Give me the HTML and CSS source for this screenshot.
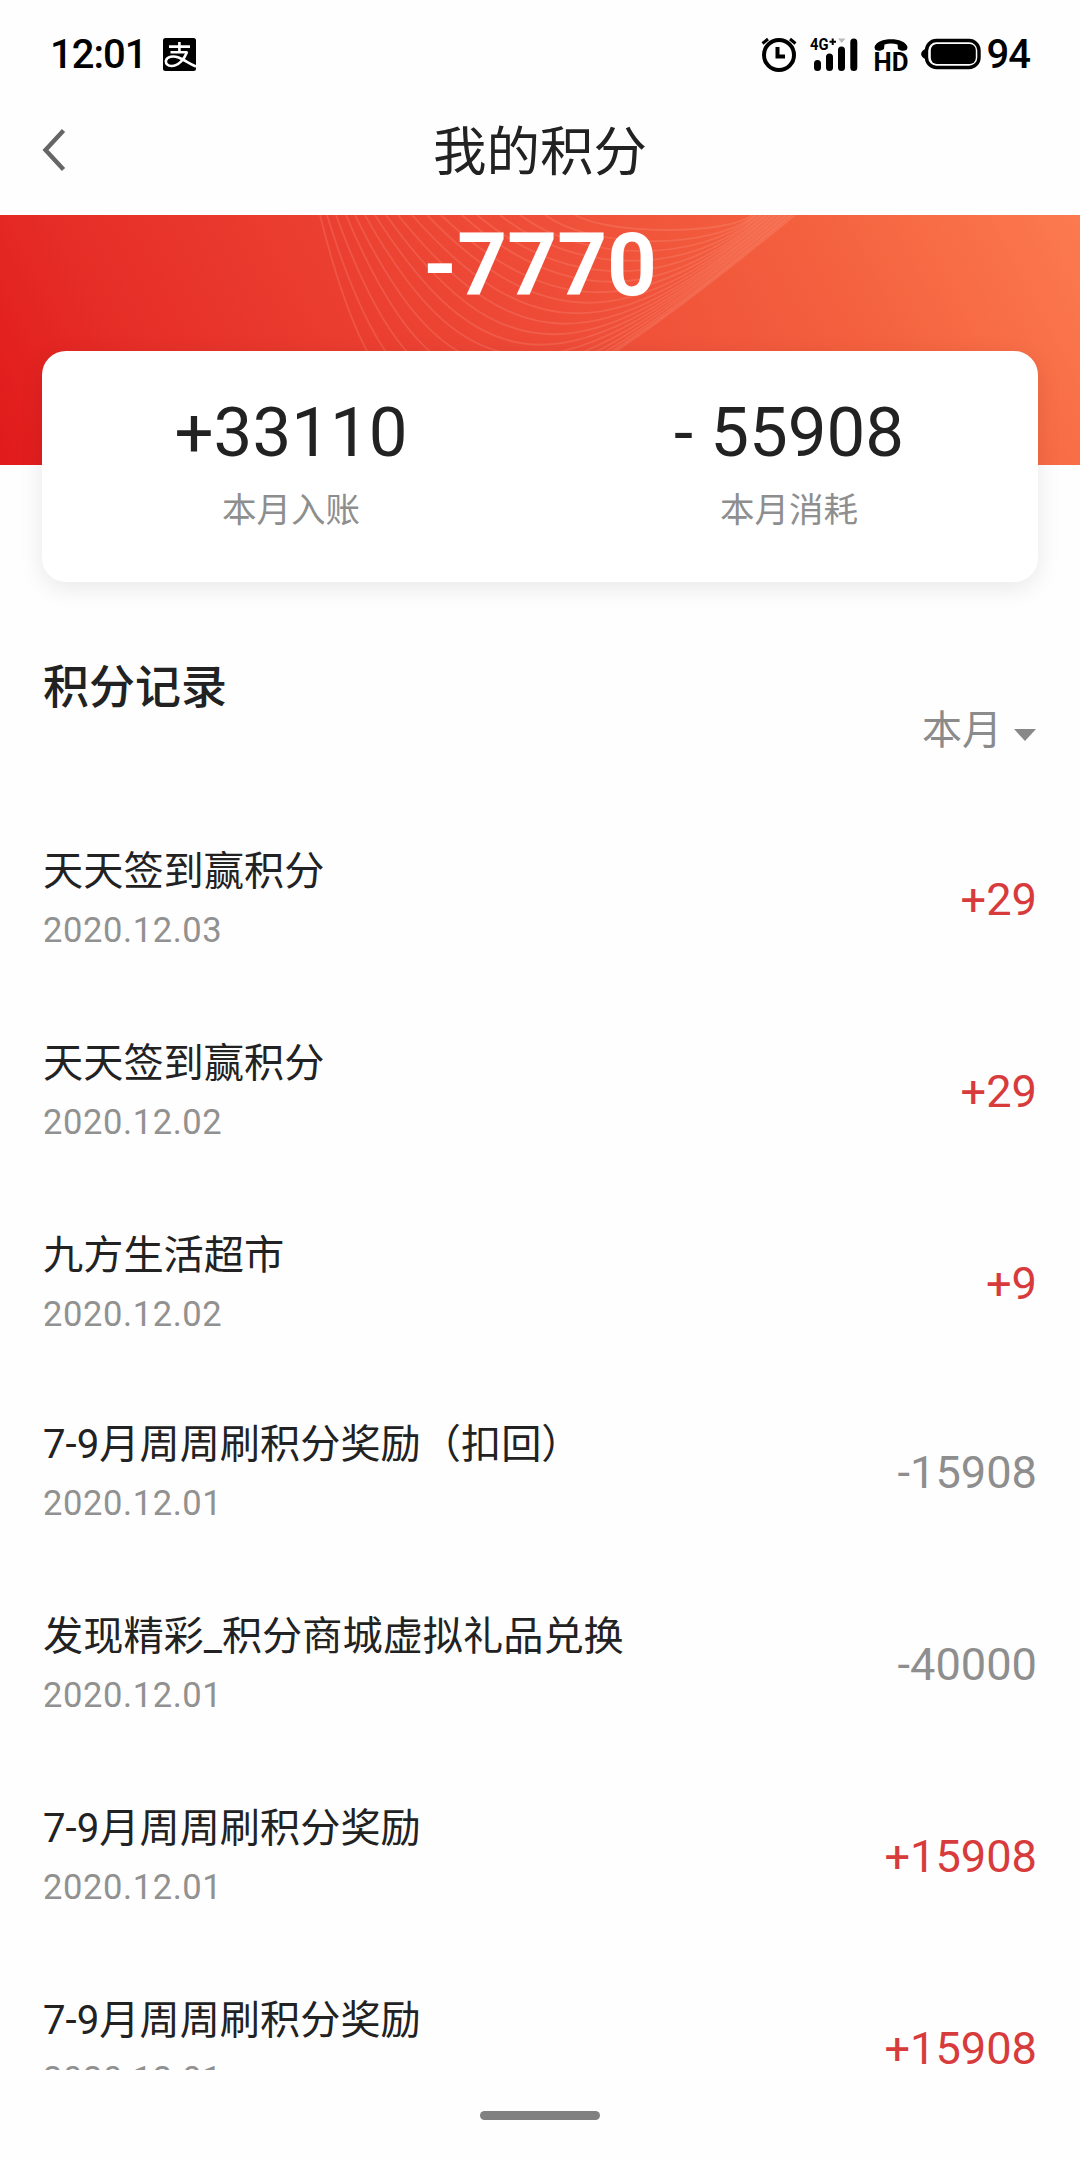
FILE: index.html
```
<!DOCTYPE html>
<html lang="zh-CN">
<head>
<meta charset="utf-8">
<title>我的积分</title>
<link rel="stylesheet" href="styles.css">
</head>
<body>
<div class="screen">
  <div class="status">
    <span class="clock">12:01</span>
    <svg class="pay" width="33" height="33" viewBox="0 0 33 33">
      <rect width="33" height="33" rx="2.5" fill="#000"/>
      <g fill="none" stroke="#fff" stroke-width="2.6">
        <path d="M6 8.6H27M16.4 4V14M7.5 14.2H24.5"/>
        <path d="M24 14C21.5 21 15.500 28 8.500 28C4.500 28 2.500 25.500 3 22.500C4 18.500 10 17.500 15.500 19.500C21 21.500 26 25.500 33 28.500"/>
      </g>
    </svg>
    <div class="indicators">
      <svg class="alarm" width="36" height="36" viewBox="0 0 36 36" fill="none" stroke="#000">
        <circle cx="18" cy="19" r="15" stroke-width="4"/>
        <path d="M16.500 11V20.500H24" stroke-width="4"/>
        <path d="M1.500 7.500L7 3M34.500 7.500L29 3" stroke-width="3"/>
      </svg>
      <svg class="signal" width="50" height="36" viewBox="0 0 50 36">
        <text x="0" y="14" class="net" textLength="18.500" lengthAdjust="spacingAndGlyphs">4G</text>
        <path d="M22.700 2.500V9M19.500 5.700H26" stroke="#000" stroke-width="2"/>
        <path d="M28 2.500H35.500L31.700 7Z" fill="#bbb"/>
        <g stroke="#000" stroke-width="7" stroke-linecap="round">
          <path d="M7.500 27.500V31.500M19.500 21V31.500M31.500 14V31.500M43.800 6V31.500"/>
        </g>
      </svg>
      <svg class="hd" width="34" height="36" viewBox="0 0 34 36">
        <path d="M0.500 11C3 0.500 31 0.500 33.500 11L33 13.500C30 15.500 27 15 24 13L23.500 8.500C19 7 15 7 10.500 8.500L10 13C7 15 4 15.500 1 13.500Z"/>
        <text x="-0.500" y="34.500" class="hd-text" textLength="35" lengthAdjust="spacingAndGlyphs">HD</text>
      </svg>
      <svg class="battery" width="60" height="32" viewBox="0 0 60 32">
        <path d="M5 10.500C-1.500 13.500 -1.500 18.500 5 21.500Z"/>
        <rect x="5.500" y="2.500" width="52.500" height="27" rx="10" fill="#fff" stroke="#000" stroke-width="3.400"/>
        <rect x="9.800" y="6" width="45" height="20" rx="6"/>
      </svg>
      <span class="level">94</span>
    </div>
  </div>
  <header class="nav">
    <svg class="back" width="26" height="46" viewBox="0 0 26 46"><path d="M23.500 3.500L5.500 23L23.500 42.500" fill="none" stroke="#666" stroke-width="4.400"/></svg>
    <h1>我的积分</h1>
  </header>
  <section class="hero">
    <svg class="waves" width="1080" height="250" viewBox="0 0 1080 250" fill="none" stroke="#ffb09a" stroke-opacity=".2" stroke-width="1.800">
      <path d="M320 0C387 270 466 270 795 0"/>
      <path d="M327 0C405 253 488 253 792 0"/>
      <path d="M336 0C422 236 507 236 790 0"/>
      <path d="M346 0C439 220 523 220 787 0"/>
      <path d="M355 0C454 203 541 203 785 0"/>
      <path d="M365 0C470 187 558 187 782 0"/>
      <path d="M375 0C485 173 572 173 780 0"/>
      <path d="M386 0C500 159 587 159 777 0"/>
      <path d="M398 0C515 145 602 145 775 0"/>
      <path d="M412 0C528 131 616 131 772 0"/>
      <path d="M427 0C540 117 630 117 770 0"/>
      <path d="M441 0C549 103 645 103 767 0"/>
      <path d="M462 0C561 89 659 89 765 0"/>
      <path d="M477 0C567 75 672 75 762 0"/>
      <path d="M500 0C577 61 687 61 760 0"/>
      <path d="M520 0C584 48 699 48 757 0"/>
      <path d="M545 0C594 35 713 35 755 0"/>
      <path d="M575 0C610 20 728 20 752 0"/>
    </svg>
    <div class="total">-7770</div>
  </section>
  <section class="card">
    <div class="stat"><strong>+33110</strong><span>本月入账</span></div>
    <div class="stat"><strong>- 55908</strong><span>本月消耗</span></div>
  </section>
  <section class="head">
    <h2>积分记录</h2>
    <div class="filter">本月<svg width="22" height="12" viewBox="0 0 22 12"><path d="M0 0H22L11 12Z" fill="#888"/></svg></div>
  </section>
  <ul class="list">
    <li><div><p class="name">天天签到赢积分</p><p class="date">2020.12.03</p></div><b class="plus">+29</b></li>
    <li><div><p class="name">天天签到赢积分</p><p class="date">2020.12.02</p></div><b class="plus">+29</b></li>
    <li class="short"><div><p class="name">九方生活超市</p><p class="date">2020.12.02</p></div><b class="plus">+9</b></li>
    <li><div><p class="name">7-9月周周刷积分奖励（扣回）</p><p class="date">2020.12.01</p></div><b>-15908</b></li>
    <li><div><p class="name">发现精彩_积分商城虚拟礼品兑换</p><p class="date">2020.12.01</p></div><b>-40000</b></li>
    <li><div><p class="name">7-9月周周刷积分奖励</p><p class="date">2020.12.01</p></div><b class="plus">+15908</b></li>
    <li><div><p class="name">7-9月周周刷积分奖励</p><p class="date">2020.12.01</p></div><b class="plus">+15908</b></li>
  </ul>
  <footer class="home"><i></i></footer>
</div>
</body>
</html>
```
FILE: styles.css
```
* { box-sizing: border-box; margin: 0; padding: 0; }
body { background: #fefefe; color: #222; font-family: Roboto, "Noto Sans CJK SC", sans-serif; }
.screen { display: flex; flex-direction: column; width: 1080px; height: 2160px; overflow: hidden; }

.status { display: flex; flex: none; align-items: center; height: 108px; padding: 0 50px; color: #000; }
.clock, .level { padding-top: 1px; font-size: 40px; font-weight: 500; line-height: 107px; }
.clock { width: 113px; letter-spacing: -1px; }
.level { margin-left: 6px; letter-spacing: -1px; }
.indicators { display: flex; align-items: center; margin-left: auto; }
.signal { margin-left: 13px; }
.hd { margin-left: 14px; overflow: visible; }
.battery { margin-left: 13px; }
.net { font: bold 16px Roboto, sans-serif; }
.hd-text { font: 700 25px Roboto, sans-serif; }

.nav { display: flex; flex: none; align-items: center; height: 107px; padding: 0 40px 23px; }
.nav h1 { flex: 1; margin-right: 26px; padding-top: 5px; font-size: 53.500px; font-weight: 400; line-height: 79px; text-align: center; }

.hero { position: relative; flex: none; height: 250px; padding-top: 8px; background: linear-gradient(62deg, #e11a1b 0%, #e62e27 16%, #ee4a37 50%, #f4623f 78%, #fc7a4f 100%); }
.waves { position: absolute; top: 0; left: 0; }
.total { position: relative; color: #fff; font-size: 87px; font-weight: 700; line-height: 84px; text-align: center; }

.card { position: relative; display: flex; flex: none; height: 231px; margin: -114px 42px 0; padding-top: 44px; border-radius: 24px; background: #fff; box-shadow: 0 6px 24px rgba(0, 0, 0, .09); }
.stat { display: flex; flex: 1; flex-direction: column; align-items: center; }
.stat strong { font-size: 69px; font-weight: 400; line-height: 76px; }
.stat span { margin-top: 14px; color: #8e8e8e; font-size: 34.500px; line-height: 50px; }

.head { display: flex; flex: none; justify-content: space-between; height: 223px; padding: 75px 44px 0 43px; }
.head h2 { font-size: 46px; font-weight: 500; line-height: 60px; }
.filter { display: flex; align-items: center; gap: 12px; height: 60px; margin-top: 44px; color: #8b8b8b; font-size: 40px; line-height: 60px; }
.filter svg { margin-top: 8px; }

.list { flex: 1; min-height: 0; overflow: hidden; list-style: none; }
.list li { display: flex; align-items: center; justify-content: space-between; height: 192px; padding: 0 43px; }
.list .short { align-items: flex-start; height: 189px; padding-top: 38px; }
.name { font-size: 40.200px; line-height: 58px; }
.date { color: #919191; font-size: 34.500px; letter-spacing: .6px; line-height: 58px; }
.list b { padding-bottom: 3px; color: #8e8e8e; font-size: 45.200px; font-weight: 400; line-height: 54px; }
.list .short b { margin-top: 30px; }
.list .plus { color: #d83b3b; }

.home { display: flex; flex: none; justify-content: center; height: 90px; padding-top: 41px; }
.home i { width: 120px; height: 9px; border-radius: 5px; background: #808080; }
```
